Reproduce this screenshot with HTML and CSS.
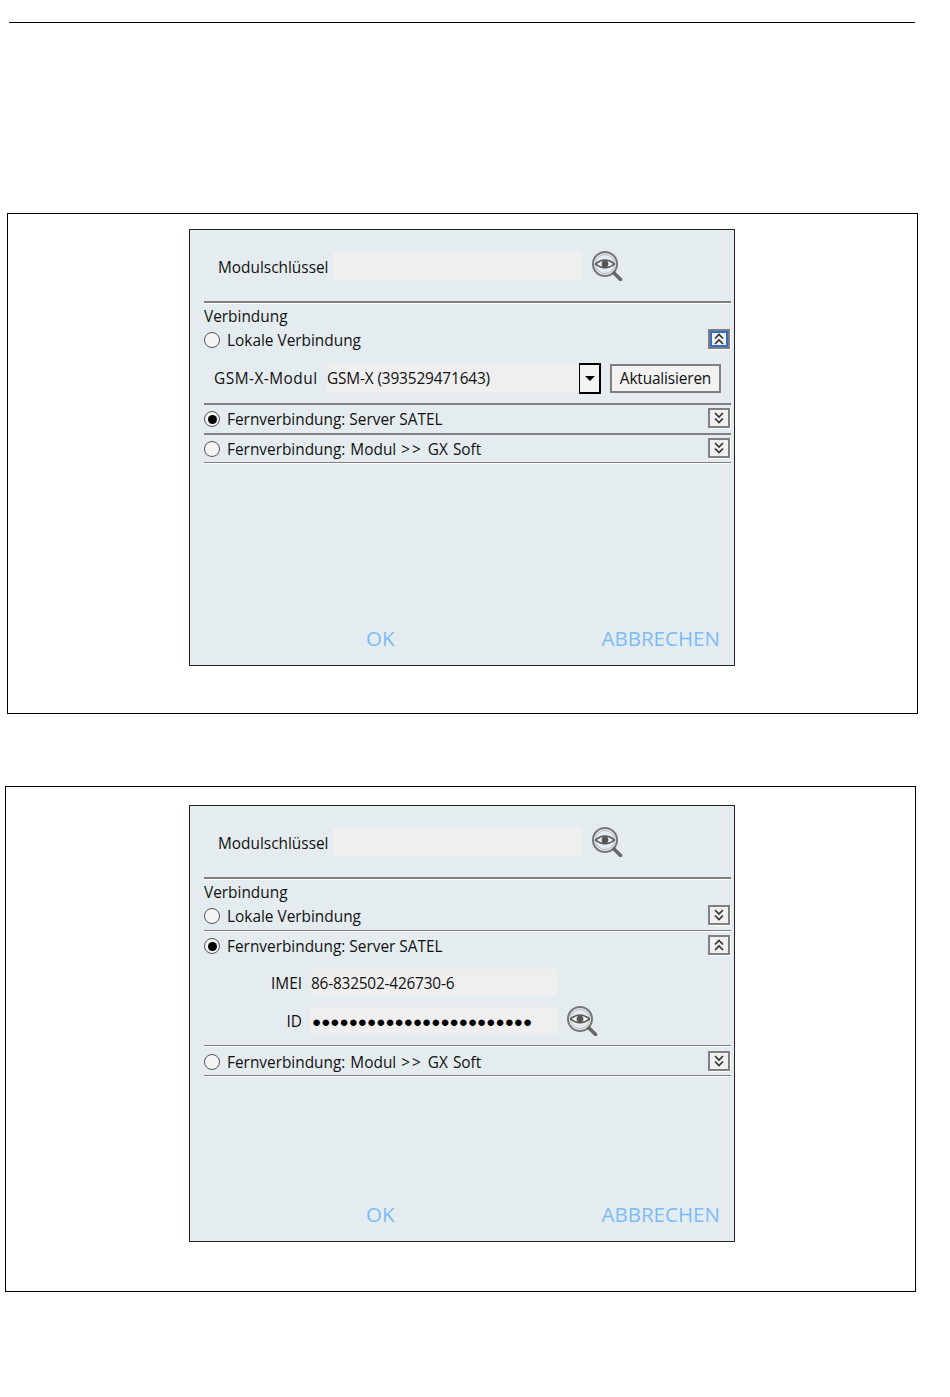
FILE: index.html
```html
<!DOCTYPE html>
<html lang="de">
<head>
    <meta charset="UTF-8">
    <meta name="viewport" content="width=device-width, initial-scale=1.0">
    <title>Verbindung</title>
    <link rel="stylesheet" href="styles.css">
</head>
<body>
    <svg class="defs" width="0" height="0" aria-hidden="true">
        <symbol id="eye" viewBox="0 0 32 30">
            <circle cx="14" cy="13" r="12" fill="none" stroke="#777" stroke-width="2"/>
            <circle cx="14" cy="13" r="9.5" fill="none" stroke="#b5b9ba" stroke-width="1"/>
            <path d="M4.5 13 Q14 5 23.5 13 Q14 20.5 4.5 13 Z" fill="#eef2f3" stroke="#555" stroke-width="1.5"/>
            <circle cx="14" cy="12.8" r="3.4" fill="#555"/>
            <path d="M23 22 L29.5 28.5" stroke="#666" stroke-width="3.6" stroke-linecap="round"/>
        </symbol>
        <symbol id="chev-down" viewBox="0 0 14 14">
            <path d="M3 2 L7 6 L11 2 M3 7.5 L7 11.5 L11 7.5" fill="none" stroke="#333" stroke-width="1.7"/>
        </symbol>
        <symbol id="chev-up" viewBox="0 0 14 14">
            <path d="M3 6.5 L7 2.5 L11 6.5 M3 12 L7 8 L11 12" fill="none" stroke="#333" stroke-width="1.7"/>
        </symbol>
    </svg>

    <hr class="top-rule">

    <div class="frame frame-one">
        <div class="dialog">
            <div class="key-row">
                <span class="key-label">Modulschlüssel</span>
                <div class="field key-field"></div>
                <svg class="eye"><use href="#eye"/></svg>
            </div>
            <div class="rule rule-head"></div>
            <div class="group-title">Verbindung</div>

            <div class="option option-first">
                <span class="radio"></span>
                <span class="option-text">Lokale Verbindung</span>
                <span class="toggle focused"><svg><use href="#chev-up"/></svg></span>
            </div>
            <div class="gsm-row">
                <span class="gsm-label">GSM-X-Modul</span>
                <div class="field gsm-field">GSM-X (393529471643)</div>
                <span class="drop"><span class="drop-arrow"></span></span>
                <span class="refresh">Aktualisieren</span>
            </div>
            <div class="rule rule-thick"></div>

            <div class="option">
                <span class="radio checked"></span>
                <span class="option-text">Fernverbindung: Server SATEL</span>
                <span class="toggle"><svg><use href="#chev-down"/></svg></span>
            </div>
            <div class="rule rule-thick"></div>
            <div class="option option-end">
                <span class="radio"></span>
                <span class="option-text gx-text">Fernverbindung: Modul <span class="arrows">&gt;&gt;</span> GX Soft</span>
                <span class="toggle"><svg><use href="#chev-down"/></svg></span>
            </div>
            <div class="rule"></div>

            <div class="actions">
                <span class="action-ok">OK</span>
                <span class="action-cancel">ABBRECHEN</span>
            </div>
        </div>
    </div>

    <div class="frame frame-two">
        <div class="dialog">
            <div class="key-row">
                <span class="key-label">Modulschlüssel</span>
                <div class="field key-field"></div>
                <svg class="eye"><use href="#eye"/></svg>
            </div>
            <div class="rule rule-head"></div>
            <div class="group-title">Verbindung</div>

            <div class="option option-first option-gap">
                <span class="radio"></span>
                <span class="option-text">Lokale Verbindung</span>
                <span class="toggle"><svg><use href="#chev-down"/></svg></span>
            </div>
            <div class="rule"></div>
            <div class="option">
                <span class="radio checked"></span>
                <span class="option-text">Fernverbindung: Server SATEL</span>
                <span class="toggle"><svg><use href="#chev-up"/></svg></span>
            </div>
            <div class="detail-row detail-imei">
                <span class="detail-label">IMEI</span>
                <div class="field detail-field">86-832502-426730-6</div>
            </div>
            <div class="detail-row detail-id">
                <span class="detail-label">ID</span>
                <div class="field detail-field dots">●●●●●●●●●●●●●●●●●●●●●●●●</div>
                <svg class="eye"><use href="#eye"/></svg>
            </div>
            <div class="rule"></div>
            <div class="option option-end option-last">
                <span class="radio"></span>
                <span class="option-text gx-text">Fernverbindung: Modul <span class="arrows">&gt;&gt;</span> GX Soft</span>
                <span class="toggle"><svg><use href="#chev-down"/></svg></span>
            </div>
            <div class="rule"></div>

            <div class="actions">
                <span class="action-ok">OK</span>
                <span class="action-cancel">ABBRECHEN</span>
            </div>
        </div>
    </div>
</body>
</html>
```

FILE: styles.css
```css
html, body { margin: 0; padding: 0; background: #fff; }
body { font-family: "Open Sans", "Noto Sans", Arial, sans-serif; color: #111; font-size: 15.4px; height: 1397px; overflow: hidden; }
.defs { display: block; height: 0; }

.top-rule { border: none; border-top: 1px solid #000; width: 906px; margin: 22px 0 0 9px; }

.frame { border: 1px solid #000; width: 909px; }
.frame-one { margin: 190px 0 0 7px; height: 484px; padding-top: 15px; }
.frame-two { margin: 72px 0 0 5px; height: 486px; padding-top: 18px; }
.frame-one .dialog { margin-left: 181px; }
.frame-two .dialog { margin-left: 183px; }

.dialog { width: 530px; height: 435px; background: #e4ecef; border: 1px solid #222; padding-left: 14px; display: flex; flex-direction: column; }

.rule { height: 1px; background: #808080; border-bottom: 1px solid #fff; width: 527px; flex: none; }
.rule-head { margin-top: 21px; height: 2px; }
.rule-thick { height: 2px; border-bottom: none; }
.field { background: #efefef; }

.key-row { display: flex; align-items: center; height: 29px; margin-top: 21px; padding-left: 14px; }
.key-label { width: 115px; white-space: nowrap; padding-top: 3px; }
.key-field { width: 249px; height: 29px; }
.eye { width: 32px; height: 30px; margin-left: 9px; flex: none; }

.group-title { height: 24px; line-height: 26px; }

.option { display: flex; align-items: center; height: 28px; width: 527px; flex: none; }
.option-first { height: 24px; }
.option-gap { margin-bottom: 2px; }
.option-end { margin-bottom: -1px; }
.option-last { margin-top: 1px; }
.option-text { margin-left: 7px; flex: 1; white-space: nowrap; }
.gx-text { word-spacing: 1px; }
.arrows { letter-spacing: 2px; }

.radio { width: 14px; height: 14px; border: 1px solid #555; border-radius: 50%; background: #f4f4f4; flex: none; position: relative; }
.radio.checked::after { content: ""; position: absolute; left: 2.5px; top: 2.5px; width: 9px; height: 9px; border-radius: 50%; background: #000; }

.toggle { width: 18px; height: 16px; border: 2px solid #808080; background: #f0f0f0; margin: -2px 1px 0 0; flex: none; display: flex; align-items: center; justify-content: center; box-shadow: 1px 1px 0 #fff; }
.toggle svg { width: 14px; height: 14px; }
.toggle.focused { box-shadow: inset 0 0 0 2px #2f6fc4, 1px 1px 0 #fff; }

.gsm-row { display: flex; align-items: center; height: 30px; margin: 11px 0 10px; padding-left: 10px; }
.gsm-label { width: 113px; letter-spacing: 0.5px; white-space: nowrap; }
.gsm-field { width: 252px; height: 30px; line-height: 32px; letter-spacing: -0.15px; white-space: nowrap; }
.drop { width: 19px; height: 27px; border: 2px solid #000; border-left-width: 1px; background: #f4f4f4; display: flex; align-items: center; justify-content: center; }
.drop-arrow { width: 0; height: 0; border: 5px solid transparent; border-top: 5px solid #000; border-bottom: none; }
.refresh { margin-left: 9px; width: 107px; height: 25px; line-height: 25px; border: 2px solid #808080; background: #f2f2f2; text-align: center; letter-spacing: -0.15px; }

.detail-row { display: flex; align-items: center; height: 27px; }
.detail-imei { margin-top: 9px; }
.detail-id { margin: 11px 0; }
.detail-label { width: 98px; text-align: right; padding-top: 2px; }
.detail-field { width: 246px; height: 27px; line-height: 29px; margin-left: 9px; letter-spacing: -0.2px; }
.dots { font-size: 15.2px; letter-spacing: 0; color: #000; padding-left: 1px; width: 245px; white-space: nowrap; overflow: hidden; }

.actions { margin-top: auto; height: 26px; margin-bottom: 14px; font-size: 20.5px; line-height: 26px; color: #7cbcf6; display: flex; }
.action-ok { margin-left: 162px; }
.action-cancel { margin-left: 207px; }
```
